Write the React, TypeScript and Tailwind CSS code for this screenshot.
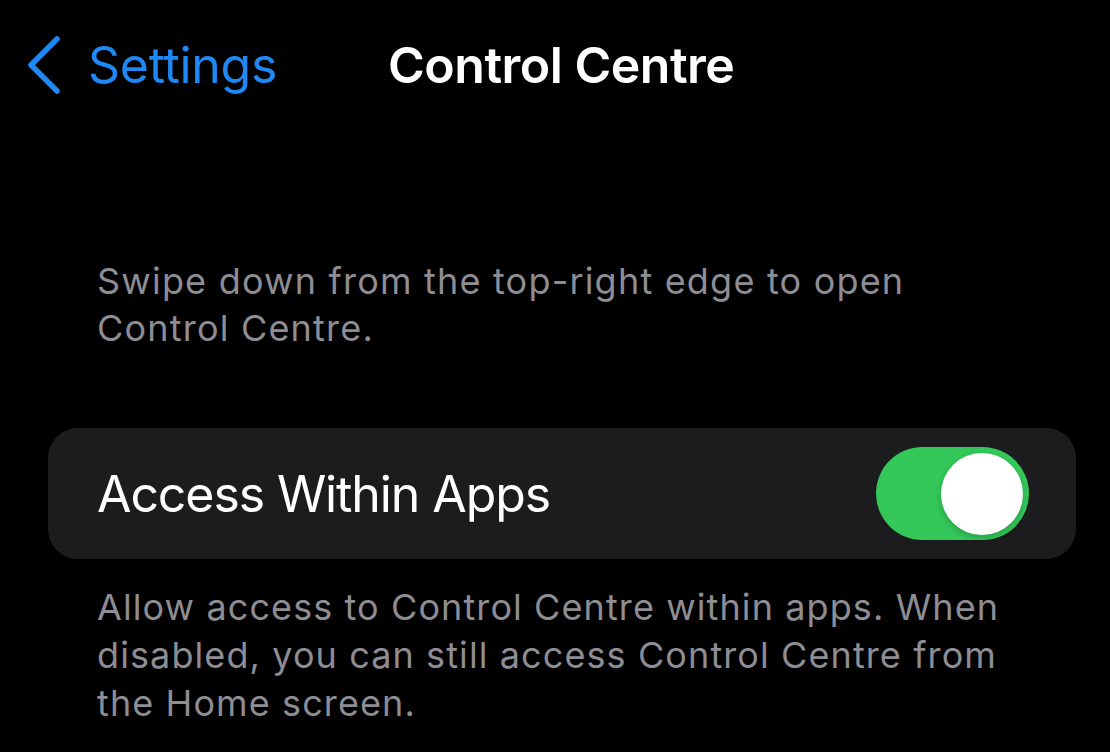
import React from "react";

export default function App() {
  return (
    <div
      className="w-[1110px] h-[752px] bg-black overflow-hidden text-white"
      style={{ fontFamily: "Inter, 'Noto Sans', sans-serif" }}
    >
      {/* Nav bar */}
      <div className="flex items-center h-[132px] pb-[2px]">
        <div className="flex items-center pl-[26px]">
          <svg width="38" height="58" viewBox="0 0 38 58" className="shrink-0">
            <path
              d="M31 3 L5 29 L31 55"
              fill="none"
              stroke="#1e88f5"
              strokeWidth="5.5"
              strokeLinecap="round"
              strokeLinejoin="round"
            />
          </svg>
          <span className="ml-[24px] text-[50px] leading-none text-[#1e88f5] tracking-[-0.3px]">
            Settings
          </span>
        </div>
        <span className="ml-[111px] text-[50px] leading-none font-semibold tracking-[-0.5px]">
          Control Centre
        </span>
      </div>

      {/* Description */}
      <div className="mt-[126px] pl-[97px] pr-[150px] text-[36px] leading-[47px] text-[#8d8d93] tracking-[1.2px]">
        Swipe down from the top-right edge to open Control Centre.
      </div>

      {/* Card */}
      <div className="mt-[76px] mx-[48px] w-[1028px] h-[131px] rounded-[30px] bg-[#1c1c1e] flex items-center justify-between pl-[49px] pr-[47px]">
        <span className="text-[50px] leading-none tracking-[-1.1px]">Access Within Apps</span>
        <div className="w-[153px] h-[93px] rounded-full bg-[#34c759] flex items-center justify-end pr-[6px]">
          <div className="w-[82px] h-[82px] rounded-full bg-white shadow-[0_3px_6px_rgba(0,0,0,0.2)]" />
        </div>
      </div>

      {/* Footer */}
      <div className="mt-[24px] pl-[97px] pr-[100px] text-[36px] leading-[48px] text-[#8d8d93] tracking-[1.1px]">
        Allow access to Control Centre within apps. When disabled, you can still access Control Centre from the Home screen.
      </div>
    </div>
  );
}
